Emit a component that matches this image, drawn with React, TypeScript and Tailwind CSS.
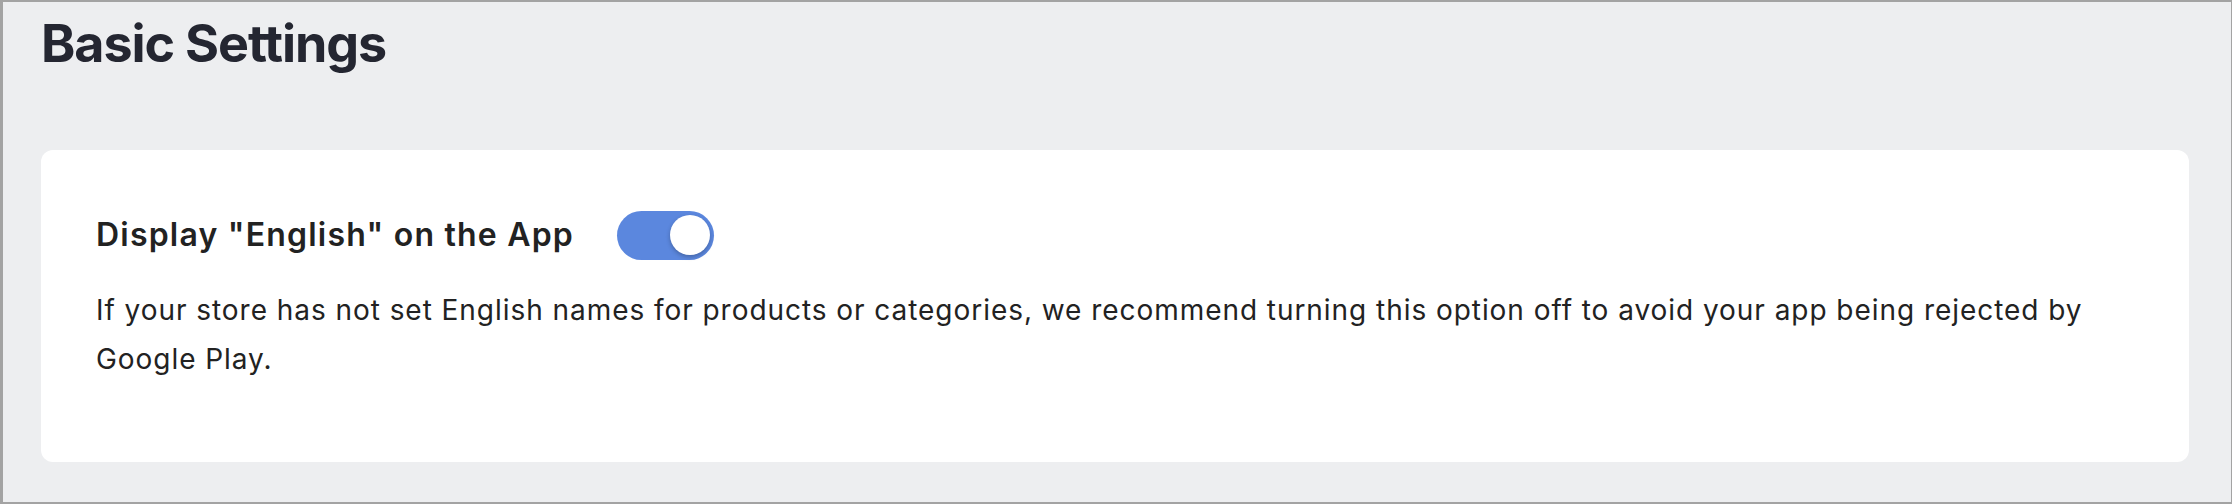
import React from "react";

export default function App() {
  return (
    <div
      className="w-[2232px] h-[504px] bg-[#edeef0] border-[#a3a3a3] border-l-[3px] border-t-2 border-r border-b-2 box-border pl-[38px] pr-[42px] pt-[14px] overflow-hidden"
      style={{ fontFamily: "Inter, 'Noto Sans', sans-serif" }}
    >
      <h1 className="text-[52px] leading-[56px] font-bold text-[#242631] tracking-[-1.1px]">
        Basic Settings
      </h1>
      <div className="mt-[78px] bg-white rounded-[12px] pl-[55px] pr-[56px] pt-[61px] pb-[78px]">
        <div className="flex items-center h-[48px]">
          <span className="text-[32px] font-semibold text-[#222222] tracking-[1.2px]">
            Display "English" on the App
          </span>
          <button
            type="button"
            className="ml-[43px] w-[97px] h-[49px] rounded-full bg-[#5b87de] flex items-center justify-end pr-[4px]"
          >
            <span className="w-[40px] h-[40px] rounded-full bg-white shadow-[0_2px_4px_rgba(0,0,0,0.25)]" />
          </button>
        </div>
        <p className="mt-[27px] text-[28px] leading-[49px] text-[#222222] tracking-[0.95px]">
          If your store has not set English names for products or categories, we recommend turning this option off to avoid your app being rejected by Google Play.
        </p>
      </div>
    </div>
  );
}
